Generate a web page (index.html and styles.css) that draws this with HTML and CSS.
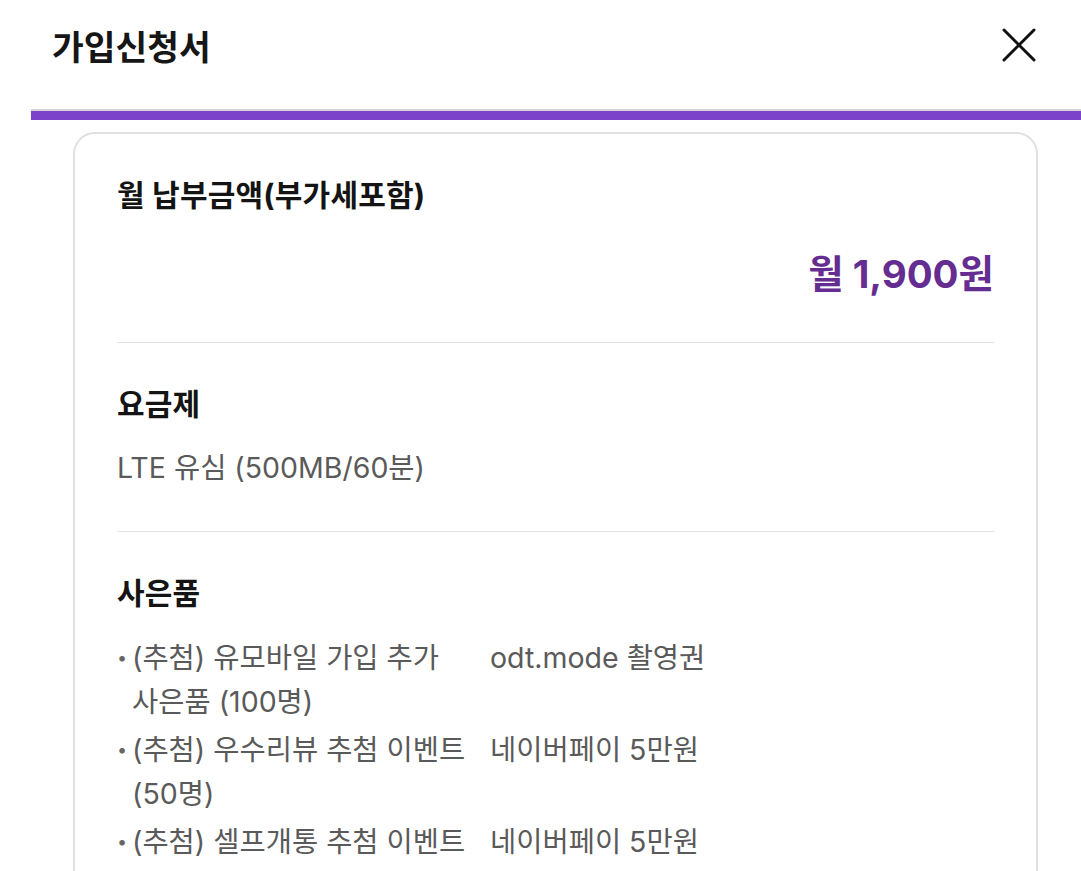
FILE: index.html
```html
<!DOCTYPE html>
<html lang="ko">
<head>
<meta charset="utf-8">
<title>가입신청서</title>
<link rel="stylesheet" href="styles.css">
</head>
<body>
<header class="top">
  <h1 class="top-title">가입신청서</h1>
  <button class="close" aria-label="닫기">
    <svg width="34" height="34" viewBox="0 0 34 34"><path d="M2 2 L32 32 M32 2 L2 32" stroke="#111" stroke-width="3" stroke-linecap="round" fill="none"/></svg>
  </button>
</header>
<main class="body">
  <div class="progress"><div class="progress-fill"></div></div>
  <section class="card">
    <div class="sec">
      <h2 class="sec-title">월 납부금액(부가세포함)</h2>
      <p class="price">월 1,900원</p>
    </div>
    <div class="sec">
      <h2 class="sec-title">요금제</h2>
      <p class="value">LTE 유심 (500MB/60분)</p>
    </div>
    <div class="sec last">
      <h2 class="sec-title">사은품</h2>
      <ul class="gifts">
        <li class="gift"><span class="gift-name">(추첨) 유모바일 가입 추가 사은품 (100명)</span><span class="gift-item">odt.mode 촬영권</span></li>
        <li class="gift"><span class="gift-name">(추첨) 우수리뷰 추첨 이벤트 (50명)</span><span class="gift-item">네이버페이 5만원</span></li>
        <li class="gift"><span class="gift-name">(추첨) 셀프개통 추첨 이벤트 (50명)</span><span class="gift-item">네이버페이 5만원</span></li>
      </ul>
    </div>
  </section>
</main>
</body>
</html>
```

FILE: styles.css
```css
* { box-sizing: border-box; }
html, body { margin: 0; padding: 0; background: #fff; }
body {
  font-family: Inter, "Noto Sans CJK KR", sans-serif;
  color: #111;
  overflow: hidden;
  height: 871px;
  word-break: keep-all;
}
.top {
  height: 109px;
  display: flex;
  align-items: center;
  justify-content: space-between;
  padding: 0 45px 20px 52px;
}
.top-title {
  margin: 0;
  font-size: 34.5px;
  font-weight: 600;
  letter-spacing: 0;
  color: #161616;
}
.close {
  border: 0;
  background: none;
  padding: 0;
  width: 34px;
  height: 34px;
  display: flex;
}
.body {
  margin-left: 31px;
}
.progress {
  border-top: 2px solid #d6d6d6;
  height: 11px;
  background: #d6d6d6;
}
.progress-fill {
  height: 9px;
  width: 100%;
  background: #7c42ca;
}
.card {
  margin: 12px 43px 0 42px;
  border: 2px solid #e0e0e0;
  border-radius: 22px;
  padding: 0 42px;
}
.sec {
  padding: 41px 0 43px;
  border-bottom: 1px solid #e3e3e3;
}
.sec.last { border-bottom: 0; }
.sec-title {
  margin: 0;
  font-size: 30px;
  line-height: 40px;
  font-weight: 700;
  letter-spacing: 0.2px;
  color: #141414;
}
.price {
  margin: 34px 0 0;
  text-align: right;
  font-size: 38.5px;
  line-height: 50px;
  font-weight: 700;
  letter-spacing: 0;
  color: #652d91;
}
.value {
  margin: 24px 0 0;
  font-size: 28.5px;
  line-height: 40px;
  letter-spacing: 0;
  color: #5a5a5a;
}
.gifts {
  list-style: none;
  margin: 23px 0 0;
  padding: 0;
  display: flex;
  flex-direction: column;
  gap: 4px;
}
.gift {
  display: grid;
  grid-template-columns: 15px 343px auto;
  font-size: 28.5px;
  line-height: 44px;
  letter-spacing: 0;
  color: #5a5a5a;
}
.gift::before {
  content: "•";
  font-size: 18px;
  color: #666;
}
.gift-item { padding-left: 15px; }
```
